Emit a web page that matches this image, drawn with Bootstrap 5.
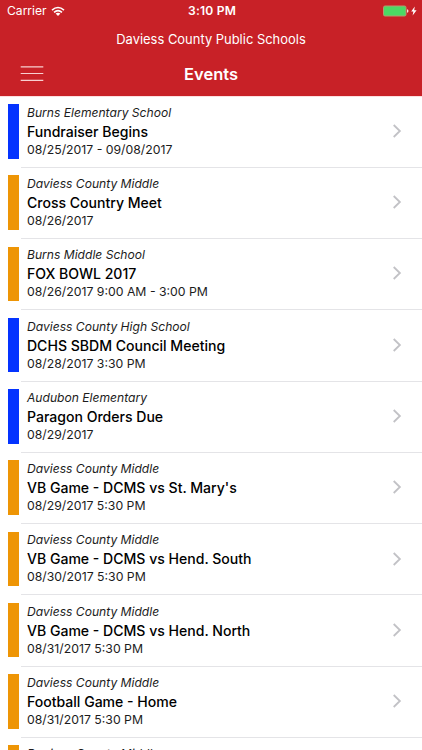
<!DOCTYPE html>
<html lang="en">
<head>
<meta charset="utf-8">
<meta name="viewport" content="width=device-width, initial-scale=1">
<title>Events</title>
<link href="https://cdn.jsdelivr.net/npm/bootstrap@5.3.0/dist/css/bootstrap.min.css" rel="stylesheet">
<style>
body{font-family:Inter,"Liberation Sans",sans-serif;height:750px;color:#000}
.app-head{background:#c82127;height:96px;flex:none}
.status{height:22px;font-size:12.1px;line-height:22px;padding:0 5px 0 7px}
.status-time{font-weight:600;letter-spacing:.2px}
.district{height:34px;line-height:34px;font-size:12.95px}
.title-bar{height:36px;padding:0 20px}
.title-bar h1{font-size:16.5px;font-weight:600;line-height:36px}
.menu-btn{width:24px;height:18px}
.event-list{border-top:1px solid #fddfe0;min-height:0}
.event{height:71.28px;flex:none;padding-left:8.4px}
.event:first-child{height:70.8px}
.event:first-child .event-body{padding-top:7px}
.event:first-child .stripe{margin-top:7px}
.stripe{width:10.3px;height:54.5px;margin-top:7.5px;flex:none}
.is-blue{background:#0433ff}
.is-orange{background:#ee9505}
.event-body{margin-left:2px;padding:7.2px 20px 0 6.3px;border-bottom:1px solid #e4e4e7;min-width:0}
.school{font-size:12.1px;line-height:17px;font-style:italic;color:#1c1c1c}
.name{font-size:14.05px;line-height:21px;font-weight:500}
.when{font-size:12.28px;line-height:16px;color:#1c1c1c}
.chev{margin-top:18.2px;flex:none}
</style>
<script src="https://cdn.jsdelivr.net/npm/bootstrap@5.3.0/dist/js/bootstrap.bundle.min.js"></script>
</head>
<body class="d-flex flex-column overflow-hidden bg-white">
<header class="app-head text-white">
  <div class="status row g-0 align-items-center">
    <div class="col d-flex align-items-center">
      <span>Carrier</span>
      <svg class="ms-1" width="14" height="11" viewBox="0 0 14 11" fill="none" stroke="#fff" stroke-width="1.5"><path d="M1 4.1Q7-1.2 13 4.1M3 6.4Q7 2.9 11 6.4"/><path d="M4.6 7.6Q7 5.7 9.4 7.6L7 10Z" fill="#fff" stroke="none"/></svg>
    </div>
    <div class="col-auto status-time">3:10 PM</div>
    <div class="col d-flex justify-content-end align-items-center">
      <svg width="34" height="12" viewBox="0 0 34 12"><rect x=".5" y="1" width="22.5" height="10" rx="1.5" fill="#4cd964" stroke="#b59a70" stroke-width="1"/><path d="M24 4.2q1.5.3 1.5 1.8T24 7.8z" fill="#fbdcdc"/><path d="M31.8 1.5L28.2 6.6h2.2L29.6 10.6l4-5.4h-2.4z" fill="#fff"/></svg>
    </div>
  </div>
  <div class="district text-center">Daviess County Public Schools</div>
  <div class="title-bar row g-0 align-items-center">
    <div class="col d-flex">
      <button class="menu-btn btn p-0 border-0 d-flex" aria-label="Menu"><svg width="24" height="18" viewBox="0 0 24 18" stroke="#f8cfd0" stroke-width="1.2"><path d="M.7 1.8h22.6M.7 8.5h22.6M.7 15.3h22.6"/></svg></button>
    </div>
    <h1 class="col-auto mb-0">Events</h1>
    <div class="col"></div>
  </div>
</header>
<main id="events" class="event-list d-flex flex-column flex-fill overflow-hidden"></main>
<script>
const events = [
  ["blue","Burns Elementary School","Fundraiser Begins","08/25/2017 - 09/08/2017"],
  ["orange","Daviess County Middle","Cross Country Meet","08/26/2017"],
  ["orange","Burns Middle School","FOX BOWL 2017","08/26/2017 9:00 AM - 3:00 PM"],
  ["blue","Daviess County High School","DCHS SBDM Council Meeting","08/28/2017 3:30 PM"],
  ["blue","Audubon Elementary","Paragon Orders Due","08/29/2017"],
  ["orange","Daviess County Middle","VB Game - DCMS vs St. Mary's","08/29/2017 5:30 PM"],
  ["orange","Daviess County Middle","VB Game - DCMS vs Hend. South","08/30/2017 5:30 PM"],
  ["orange","Daviess County Middle","VB Game - DCMS vs Hend. North","08/31/2017 5:30 PM"],
  ["orange","Daviess County Middle","Football Game - Home","08/31/2017 5:30 PM"],
  ["orange","Daviess County Middle","",""]
];
document.getElementById("events").innerHTML = events.map(([c, school, name, when]) => `
  <article class="event d-flex">
    <div class="stripe is-${c}"></div>
    <div class="event-body d-flex flex-grow-1 justify-content-between">
      <div class="text-nowrap">
        <div class="school">${school}</div>
        <div class="name">${name}</div>
        <div class="when">${when}</div>
      </div>
      ${name ? '<svg class="chev" width="10" height="16" viewBox="0 0 10 16" fill="none" stroke="#c2c2c6" stroke-width="1.8"><path d="M1.7 3L7.9 9L1.7 15"/></svg>' : ''}
    </div>
  </article>`).join("");
</script>
</body>
</html>
